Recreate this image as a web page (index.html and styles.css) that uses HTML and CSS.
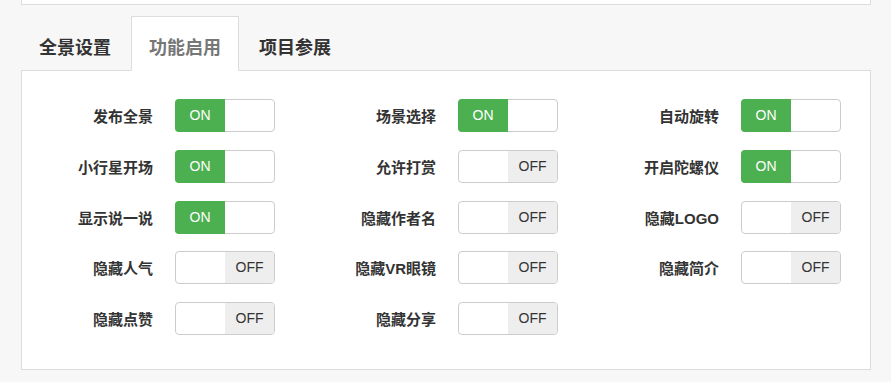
FILE: index.html
```html
<!DOCTYPE html>
<html lang="zh-CN">
<head>
    <meta charset="UTF-8">
    <title>功能启用</title>
    <link rel="stylesheet" href="styles.css">
</head>
<body>
    <div class="top-panel"></div>

    <ul class="tabs">
        <li><a href="#">全景设置</a></li>
        <li class="active"><a href="#">功能启用</a></li>
        <li><a href="#">项目参展</a></li>
    </ul>

    <div class="panel">
        <div class="switch-grid">
            <div class="item"><span class="label">发布全景</span><span class="switch on"><span class="on-part">ON</span><span class="off-part"></span></span></div>
            <div class="item"><span class="label">场景选择</span><span class="switch on"><span class="on-part">ON</span><span class="off-part"></span></span></div>
            <div class="item"><span class="label">自动旋转</span><span class="switch on"><span class="on-part">ON</span><span class="off-part"></span></span></div>

            <div class="item"><span class="label">小行星开场</span><span class="switch on"><span class="on-part">ON</span><span class="off-part"></span></span></div>
            <div class="item"><span class="label">允许打赏</span><span class="switch off"><span class="on-part"></span><span class="off-part">OFF</span></span></div>
            <div class="item"><span class="label">开启陀螺仪</span><span class="switch on"><span class="on-part">ON</span><span class="off-part"></span></span></div>

            <div class="item"><span class="label">显示说一说</span><span class="switch on"><span class="on-part">ON</span><span class="off-part"></span></span></div>
            <div class="item"><span class="label">隐藏作者名</span><span class="switch off"><span class="on-part"></span><span class="off-part">OFF</span></span></div>
            <div class="item"><span class="label">隐藏LOGO</span><span class="switch off"><span class="on-part"></span><span class="off-part">OFF</span></span></div>

            <div class="item"><span class="label">隐藏人气</span><span class="switch off"><span class="on-part"></span><span class="off-part">OFF</span></span></div>
            <div class="item"><span class="label">隐藏VR眼镜</span><span class="switch off"><span class="on-part"></span><span class="off-part">OFF</span></span></div>
            <div class="item"><span class="label">隐藏简介</span><span class="switch off"><span class="on-part"></span><span class="off-part">OFF</span></span></div>

            <div class="item"><span class="label">隐藏点赞</span><span class="switch off"><span class="on-part"></span><span class="off-part">OFF</span></span></div>
            <div class="item"><span class="label">隐藏分享</span><span class="switch off"><span class="on-part"></span><span class="off-part">OFF</span></span></div>
        </div>
    </div>
</body>
</html>
```

FILE: styles.css
```css
body {
    margin: 0;
    background-color: #f7f7f7;
    font-family: "Liberation Sans", "Noto Sans CJK SC", sans-serif;
    color: #333;
}

.top-panel {
    width: 848px;
    height: 4px;
    margin-left: 21px;
    background-color: #fff;
    border: 1px solid #ddd;
    border-top: none;
}

.tabs {
    display: flex;
    list-style: none;
    margin: 11px 0 0 21px;
    padding: 0;
}

.tabs li {
    margin-right: 2px;
    margin-bottom: -1px;
}

.tabs a {
    display: block;
    padding: 19px 17px 10px;
    line-height: 24px;
    border: 1px solid transparent;
    font-size: 18px;
    font-weight: bold;
    color: #333;
    text-decoration: none;
}

.tabs .active a {
    background-color: #fff;
    border-color: #ddd;
    border-bottom-color: #fff;
    color: #777;
}

.panel {
    width: 848px;
    height: 298px;
    margin-left: 21px;
    background-color: #fff;
    border: 1px solid #ddd;
}

.switch-grid {
    display: grid;
    grid-template-columns: repeat(3, 283px);
    row-gap: 17.75px;
    padding-top: 28px;
}

.item {
    display: flex;
    align-items: center;
    gap: 22px;
}

.label {
    width: 131px;
    text-align: right;
    font-size: 15px;
    font-weight: bold;
    color: #333;
}

.switch {
    display: flex;
    width: 98px;
    height: 31px;
    border: 1px solid #ccc;
    border-radius: 4px;
    font-size: 14px;
    line-height: 31px;
    text-align: center;
}

.switch span {
    width: 49px;
}

.switch.on .on-part {
    margin: -1px 0 -1px -1px;
    width: 50px;
    line-height: 33px;
    background-color: #4caf50;
    border-radius: 4px 0 0 4px;
    color: #fff;
}

.switch.off .off-part {
    background-color: #eee;
    border-radius: 0 3px 3px 0;
    color: #333;
}
```
